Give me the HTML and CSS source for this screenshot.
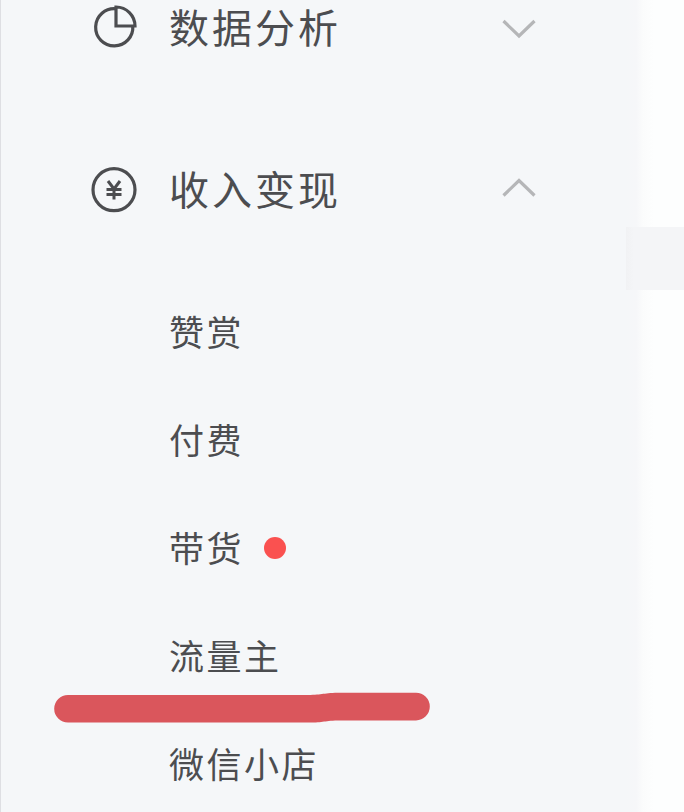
FILE: index.html
```html
<!DOCTYPE html>
<html lang="zh-CN">
<head>
    <meta charset="UTF-8">
    <meta name="viewport" content="width=device-width, initial-scale=1.0">
    <title>收入变现</title>
    <link rel="stylesheet" href="styles.css">
</head>
<body>
    <div class="sidebar">
        <div class="menu-header">
            <svg class="menu-icon" viewBox="0 0 48 48">
                <path d="M26 4.8A18.6 18.6 0 1 0 42.8 22"/>
                <path d="M26 3V22H45A19 19 0 0 0 26 3Z"/>
            </svg>
            <span class="menu-title">数据分析</span>
            <svg class="arrow" viewBox="0 0 36 20">
                <path d="M2.5 3L18 18L33.5 3"/>
            </svg>
        </div>
        <div class="menu-header">
            <svg class="menu-icon" viewBox="0 0 48 48">
                <circle cx="24" cy="23.7" r="21"/>
                <path class="yen" d="M18 15L24 23L30 15M16.5 23.5H31.5M16.5 28.5H31.5M24 23V33.5"/>
            </svg>
            <span class="menu-title">收入变现</span>
            <svg class="arrow" viewBox="0 0 36 20">
                <path d="M2.5 15.5L18 .5L33.5 15.5"/>
            </svg>
        </div>
        <div class="menu-list">
            <a class="menu-item"><span class="menu-text">赞赏</span></a>
            <a class="menu-item"><span class="menu-text">付费</span></a>
            <a class="menu-item"><span class="menu-text">带货</span><span class="dot"></span></a>
            <a class="menu-item"><span class="menu-text">流量主</span>
                <svg class="marker" viewBox="0 0 378 32">
                    <path d="M15 3H255C270 3 270 .8 288 .8H363A13.8 13.8 0 0 1 363 28.4H288C270 28.4 272 30.6 255 30.6H15A13.8 13.8 0 0 1 15 3Z"/>
                </svg>
            </a>
            <a class="menu-item"><span class="menu-text">微信小店</span></a>
        </div>
    </div>
    <div class="content">
        <div class="content-bar"></div>
    </div>
</body>
</html>
```
FILE: styles.css
```css
* {
    margin: 0;
    padding: 0;
    box-sizing: border-box;
}
body {
    display: flex;
    height: 812px;
    background: #fdfefe;
    overflow: hidden;
    font-family: "Noto Sans CJK SC", sans-serif;
    color: #4c4d50;
}
.sidebar {
    width: 626px;
    flex-shrink: 0;
    margin-top: -53px;
    background: #f5f7f9;
    border-left: 1px solid #dedfe3;
}
.menu-header {
    display: flex;
    align-items: center;
    height: 162px;
    padding: 0 89px 0 89px;
}
.menu-icon {
    width: 48px;
    height: 48px;
    fill: none;
    stroke: #4c4d50;
    stroke-width: 3.2;
}
.yen {
    stroke-width: 3;
}
.menu-title {
    margin-left: 31px;
    padding-bottom: 4px;
    font-size: 40px;
    line-height: 44px;
    letter-spacing: 3px;
}
.arrow {
    width: 36px;
    height: 20px;
    margin-left: auto;
    overflow: visible;
    fill: none;
    stroke: #b5b6b8;
    stroke-width: 3.2;
}
.menu-list {
    padding: 7px 0 0 168px;
}
.menu-item {
    position: relative;
    display: flex;
    align-items: center;
    height: 108px;
}
.menu-text {
    padding-bottom: 4px;
    font-size: 35px;
    letter-spacing: 2.5px;
}
.dot {
    width: 22px;
    height: 22px;
    margin-left: 20px;
    border-radius: 50%;
    background: #fa5150;
}
.marker {
    position: absolute;
    left: -117px;
    top: 90px;
    width: 380px;
    height: 32px;
    fill: #da565c;
}
.content {
    flex: 1;
    padding-top: 227px;
    background: linear-gradient(90deg, #f5f7f9 0, #f6f7f9 10px, #fbfcfc 17px, #fdfefe 28px);
}
.content-bar {
    height: 63px;
    background: linear-gradient(90deg, #f1f2f4 0, #f4f5f7 8px);
}
```
